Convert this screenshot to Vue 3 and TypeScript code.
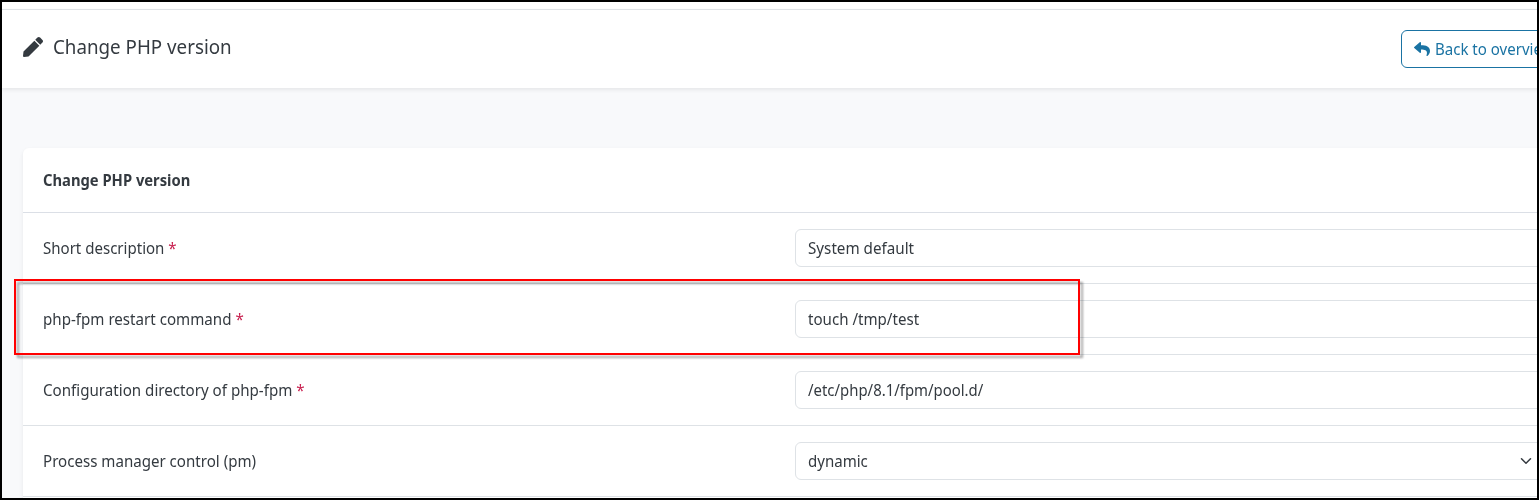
<script setup lang="ts">
interface Field {
  label: string
  labelScale: number
  value: string
  valueScale: number
  required: boolean
  select?: boolean
}

const fields: Field[] = [
  { label: 'Short description', labelScale: 0.94, value: 'System default', valueScale: 0.95, required: true },
  { label: 'php-fpm restart command', labelScale: 0.945, value: 'touch /tmp/test', valueScale: 0.943, required: true },
  { label: 'Configuration directory of php-fpm', labelScale: 0.946, value: '/etc/php/8.1/fpm/pool.d/', valueScale: 0.932, required: true },
  { label: 'Process manager control (pm)', labelScale: 0.943, value: 'dynamic', valueScale: 0.94, required: false, select: true },
]

const narrow = (scale: number) => ({ transform: `scaleX(${scale})` })
</script>

<template>
  <div class="frame">
    <header class="page-head">
      <h1 class="title">
        <svg class="pen" viewBox="0 0 512 512" aria-hidden="true">
          <path d="M290.740 93.240l128.020 128.020-277.990 277.990-114.140 12.600C11.350 513.540-1.560 500.620.140 485.340l12.700-114.220 277.900-277.880zm207.200-19.060l-60.110-60.110c-18.750-18.750-49.160-18.750-67.910 0l-56.550 56.550 128.020 128.020 56.550-56.550c18.750-18.760 18.750-49.160 0-67.910z" />
        </svg>
        <span class="text title-text">Change PHP version</span>
      </h1>
      <button class="back" type="button">
        <svg class="reply" viewBox="0 0 512 512" aria-hidden="true">
          <path d="M8.309 189.836 184.313 37.851C199.719 24.546 224 35.347 224 56.015v80.053c160.629 1.839 288 34.032 288 186.258 0 61.441-39.581 122.309-83.333 154.132-13.653 9.931-33.111-2.533-28.077-18.631 45.344-145.012-21.507-183.510-176.590-185.742V360c0 20.700-24.300 31.453-39.687 18.164l-176.004-152c-11.071-9.562-11.086-26.753 0-36.328z" />
        </svg>
        <span class="text back-text">Back to overview</span>
      </button>
    </header>

    <main class="content">
      <section class="card">
        <h2 class="card-title"><span class="text card-text">Change PHP version</span></h2>
        <div v-for="field in fields" :key="field.label" class="row">
          <div class="label">
            <span class="text" :style="narrow(field.labelScale)">{{ field.label }}<span v-if="field.required" class="star"> *</span></span>
          </div>
          <div class="control">
            <span class="text" :style="narrow(field.valueScale)">{{ field.value }}</span>
            <svg v-if="field.select" class="chevron" viewBox="0 0 16 16" aria-hidden="true">
              <path d="m2 5 6 6 6-6" />
            </svg>
          </div>
        </div>
      </section>
    </main>
    <div class="highlight"></div>
  </div>
</template>

<style>
body {
  margin: 0;
}
</style>

<style scoped>
.frame {
  position: relative;
  box-sizing: border-box;
  width: 1539px;
  height: 500px;
  border: 2px solid #000;
  padding-top: 7px;
  overflow: hidden;
  background: #fff;
  color: #343a40;
  font-family: "Noto Sans", sans-serif;
  font-size: 16px;
  line-height: 24px;
}

.text {
  display: inline-block;
  transform-origin: left center;
  white-space: pre;
}

.page-head {
  position: relative;
  display: flex;
  box-sizing: border-box;
  width: 1576px;
  height: 79px;
  padding: 20px 21px;
  border-top: 1px solid #dee2e6;
  background: #fff;
  box-shadow: 0 2px 4px rgba(0, 0, 0, 0.075);
}

.title {
  display: flex;
  flex: none;
  width: 1378px;
  height: 34px;
  align-items: center;
  gap: 9.5px;
  margin: 0;
  font-size: 19.2px;
  font-weight: 400;
}

.title-text {
  transform: scaleX(0.978);
}

.pen {
  width: 20px;
  height: 20px;
  margin-bottom: 1px;
  fill: #343a40;
}

.back {
  display: flex;
  flex: none;
  box-sizing: border-box;
  width: 156px;
  height: 38px;
  align-items: center;
  gap: 5px;
  padding: 0 11.5px;
  border: 1px solid #1a73a3;
  border-radius: 6px;
  background: #fff;
  color: #1a73a3;
  font: inherit;
  white-space: nowrap;
}

.back-text {
  transform: scaleX(0.94);
}

.reply {
  flex: none;
  width: 16px;
  height: 16px;
  fill: currentColor;
}

.content {
  height: 410px;
  padding: 60px 0 0 21px;
  background: #f8f9fb;
}

.card {
  width: 1534px;
  height: 400px;
  border-radius: 6px;
  background: #fff;
  box-shadow: 0 2px 4px rgba(0, 0, 0, 0.075);
}

.card-title {
  height: 64px;
  margin: 0;
  padding-left: 20px;
  border-bottom: 1px solid #dbdfe6;
  font-size: 16px;
  font-weight: 700;
  line-height: 64px;
}

.card-text {
  transform: scaleX(0.922);
}

.row {
  display: grid;
  grid-template-columns: 752px 752px;
  height: 38px;
  padding: 16px 20px;
  border-bottom: 1px solid #dee2e6;
}

.label {
  line-height: 38px;
}

.star {
  color: #c8204f;
}

.control {
  display: flex;
  box-sizing: border-box;
  align-items: center;
  justify-content: space-between;
  height: 38px;
  padding: 0 14px 0 12px;
  border: 1px solid #dee2e6;
  border-radius: 6px;
  background: #fff;
}

.chevron {
  width: 12px;
  height: 12px;
  fill: none;
  stroke: #343a40;
  stroke-width: 2;
  stroke-linecap: round;
  stroke-linejoin: round;
}

/* Annotation box laid over the form */
.highlight {
  position: absolute;
  box-sizing: border-box;
  top: 277px;
  left: 12px;
  width: 1066px;
  height: 76px;
  border: 2px solid #f00;
  filter: drop-shadow(3px 3px 1.2px rgba(0, 0, 0, 0.35));
}
</style>
